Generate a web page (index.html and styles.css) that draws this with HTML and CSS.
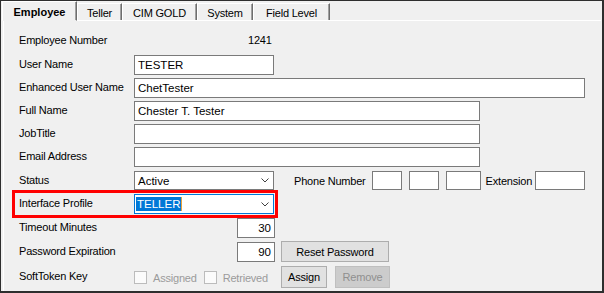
FILE: index.html
```html
<!DOCTYPE html>
<html lang="en">
<head>
    <meta charset="UTF-8">
    <title>Employee</title>
    <link rel="stylesheet" href="styles.css">
</head>
<body>

<div class="window">
    <div class="tabs">
        <div class="tab active">Employee</div>
        <div class="tab teller">Teller</div>
        <div class="tab cim">CIM GOLD</div>
        <div class="tab system">System</div>
        <div class="tab field">Field Level</div>
    </div>
    <div class="panel">
        <div class="row empRow">
            <span class="label">Employee Number</span>
            <span class="empNumber">1241</span>
        </div>
        <div class="row userRow">
            <span class="label">User Name</span>
            <div class="input short">TESTER</div>
        </div>
        <div class="row">
            <span class="label">Enhanced User Name</span>
            <div class="input wide">ChetTester</div>
        </div>
        <div class="row">
            <span class="label">Full Name</span>
            <div class="input medium">Chester T. Tester</div>
        </div>
        <div class="row">
            <span class="label">JobTitle</span>
            <div class="input medium"></div>
        </div>
        <div class="row">
            <span class="label">Email Address</span>
            <div class="input medium"></div>
        </div>
        <div class="row gap4 statusRow">
            <span class="label">Status</span>
            <div class="input short select">
                <span>Active</span>
                <svg class="chevron" width="8" height="5" viewBox="0 0 8 5"><polyline points="0.5,0.5 4,4 7.5,0.5" fill="none" stroke="#404040" stroke-width="1"/></svg>
            </div>
            <span class="phoneLabel">Phone Number</span>
            <div class="input phone1"></div>
            <div class="input phone2"></div>
            <div class="input phone3"></div>
            <span class="extLabel">Extension</span>
            <div class="input ext"></div>
        </div>
        <div class="row gap4 profileRow">
            <span class="label">Interface Profile</span>
            <div class="input short select focused">
                <span class="selected">TELLER</span>
                <svg class="chevron" width="8" height="5" viewBox="0 0 8 5"><polyline points="0.5,0.5 4,4 7.5,0.5" fill="none" stroke="#404040" stroke-width="1"/></svg>
            </div>
        </div>
        <div class="row gap4">
            <span class="label">Timeout Minutes</span>
            <div class="input number">30</div>
        </div>
        <div class="row pwdRow">
            <span class="label">Password Expiration</span>
            <div class="input number">90</div>
            <div class="button reset">Reset Password</div>
        </div>
        <div class="row gap4 tokenRow">
            <span class="label">SoftToken Key</span>
            <div class="checks">
                <span class="checkbox"></span>
                <span class="checkText">Assigned</span>
                <span class="checkbox second"></span>
                <span class="checkText">Retrieved</span>
            </div>
            <div class="button assign">Assign</div>
            <div class="button remove">Remove</div>
        </div>
    </div>
</div>

</body>
</html>
```

FILE: styles.css
```css
body {
    margin: 0;
    background: #f0f0f0;
    font-family: "Liberation Sans", Arial, sans-serif;
    font-size: 11px;
    letter-spacing: -0.2px;
    color: #000000;
}

.window {
    box-sizing: border-box;
    width: 604px;
    height: 293px;
    background: #f0f0f0;
    border-style: solid;
    border-color: #2e2e2e;
    border-width: 1px 2px 2px 1px;
    display: flex;
    flex-direction: column;
}

/*选项卡*/
.tabs {
    display: flex;
    height: 19px;
    margin-left: 1px;
}

.tab {
    box-sizing: border-box;
    height: 17px;
    margin-top: 2px;
    display: flex;
    align-items: center;
    justify-content: center;
    border-top: 1px solid #ffffff;
    border-left: 1px solid #ffffff;
    border-right: 1px solid #6d6d6d;
    box-shadow: inset -1px 0 0 #a0a0a0;
    padding-top: 1px;
}

.tab.active {
    width: 75px;
    height: 20px;
    margin-top: 0;
    font-weight: bold;
    letter-spacing: 0;
    position: relative;
    z-index: 1;
    border-bottom: 1px solid #f0f0f0;
}

.teller { width: 45px; }
.cim { width: 75px; }
.system { width: 56px; }
.field { width: 77px; }

.panel {
    flex: 1;
    margin: 0 1px 0 2px;
    padding: 12px 0 0 15px;
    border-top: 1px solid #ffffff;
    border-left: 1px solid #ffffff;
    display: flex;
    flex-direction: column;
}

.row {
    display: flex;
    align-items: center;
    height: 20px;
    margin-top: 3px;
}

.row.gap4 {
    margin-top: 4px;
}

.empRow {
    height: 16px;
    margin-top: 0;
}

.userRow {
    margin-top: 6px;
}

.statusRow {
    height: 19px;
}

.pwdRow {
    height: 21px;
}

.tokenRow {
    height: 22px;
}

.label {
    width: 115px;
    flex-shrink: 0;
    padding-bottom: 2px;
    white-space: nowrap;
}

.empNumber {
    padding-left: 114px;
    padding-bottom: 2px;
}

.input {
    box-sizing: border-box;
    height: 20px;
    background: #ffffff;
    border: 1px solid #7a7a7a;
    padding: 0 3px;
    display: flex;
    align-items: center;
    flex-shrink: 0;
    letter-spacing: 0;
    font-size: 11.5px;
}

.statusRow .input {
    height: 19px;
}

.short { width: 140px; }
.wide { width: 451px; }
.medium { width: 346px; }

.select {
    justify-content: space-between;
    padding-right: 4px;
}

.chevron {
    display: block;
}

.focused {
    border-color: #0078d7;
    padding-left: 1px;
}

.selected {
    background: #0078d7;
    color: #ffffff;
    line-height: 14px;
    padding: 0 1px 0 1px;
    border-right: 1px solid #e8a33c;
}

/*红框标注*/
.profileRow {
    width: 255px;
    position: relative;
}

.profileRow::after {
    content: "";
    position: absolute;
    top: -4px;
    bottom: -4px;
    left: -7px;
    right: -4px;
    border: 3px solid #ff0000;
}

.phoneLabel {
    margin-left: 20px;
}

.phone1 {
    width: 30px;
    margin-left: 6px;
}

.phone2 {
    width: 30px;
    margin-left: 7px;
}

.phone3 {
    width: 35px;
    margin-left: 7px;
}

.extLabel {
    margin-left: 5px;
}

.ext {
    width: 50px;
    margin-left: auto;
    margin-right: 16px;
}

.number {
    width: 38px;
    margin-left: 103px;
    justify-content: flex-end;
}

.button {
    box-sizing: border-box;
    height: 21px;
    display: flex;
    align-items: center;
    justify-content: center;
    background: #e1e1e1;
    border: 1px solid #adadad;
    flex-shrink: 0;
}

.reset {
    width: 108px;
    margin-left: 6px;
}

.checks {
    width: 147px;
    display: flex;
    align-items: center;
    flex-shrink: 0;
}

.checkbox {
    box-sizing: border-box;
    width: 13px;
    height: 13px;
    border: 1px solid #bcbcbc;
    background: #fbfbfb;
    margin-top: 1px;
}

.checkbox.second {
    margin-left: 7px;
}

.checkText {
    color: #9b9b9b;
    margin-left: 6px;
    padding-top: 1px;
}

.assign {
    width: 46px;
    height: 22px;
}

.remove {
    width: 55px;
    height: 22px;
    margin-left: 8px;
    background: #cccccc;
    border-color: #bfbfbf;
    color: #8f8f8f;
}
```
